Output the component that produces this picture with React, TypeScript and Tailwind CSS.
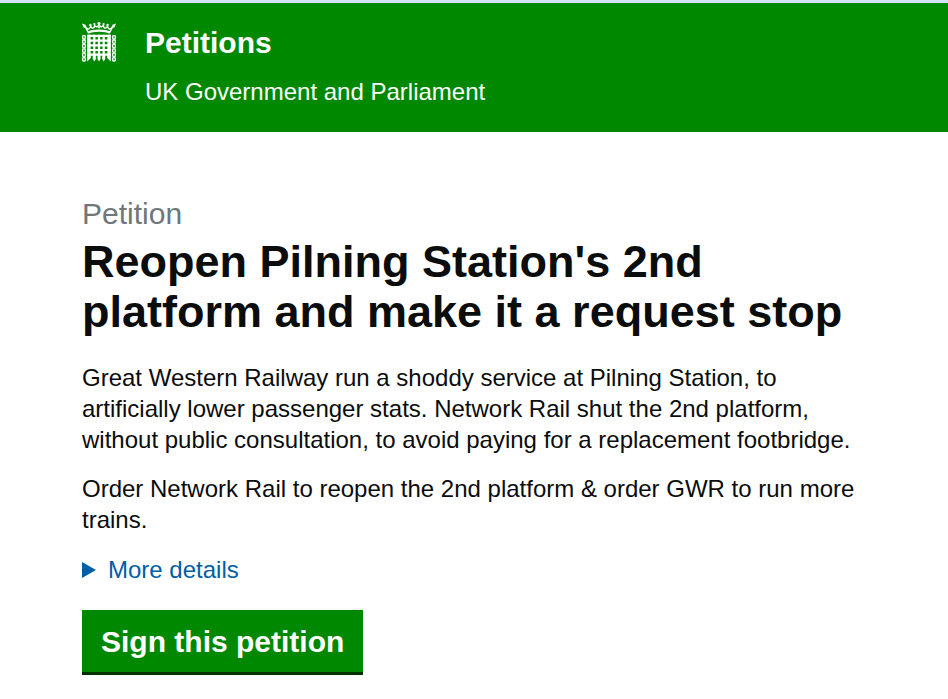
function Portcullis() {
  return (
    <svg
      viewBox="0 0 34 42"
      className="h-[42px] w-[34px] shrink-0"
      fill="none"
      stroke="#fff"
      aria-hidden="true"
    >
      {/* crown */}
      <path d="M6.6 11 L3 4 M27.4 11 L31 4" strokeWidth="1.6" />
      <path d="M6.2 10.6 C11 8 23 8 27.8 10.6" strokeWidth="2.4" />
      <path
        d="M4.5 6 C6 8 8 7.2 8.6 4.2 C10 7 12.4 6.6 12.6 3.4 C14 5.6 16 5.2 17 2.2 C18 5.2 20 5.6 21.4 3.4 C21.6 6.6 24 7 25.4 4.2 C26 7.2 28 8 29.5 6"
        strokeWidth="1.4"
      />
      <g fill="#fff" stroke="none">
        <path d="M0 1.4 L3.4 2.8 L4.8 6 L1.6 5.6 Z M34 1.4 L30.6 2.8 L29.2 6 L32.4 5.6 Z" />
        <circle cx="8.4" cy="3" r="1.2" />
        <circle cx="12.4" cy="2" r="1.1" />
        <circle cx="17" cy="1.3" r="1.5" />
        <circle cx="21.6" cy="2" r="1.1" />
        <circle cx="25.6" cy="3" r="1.2" />
        <circle cx="17" cy="5.6" r="1" />
      </g>
      {/* chains */}
      <g strokeWidth="1.3">
        {[13.6, 18, 22.4, 26.8, 31.2, 35.6].map((y) => (
          <g key={y}>
            <rect x="0.7" y={y} width="2.6" height="3.4" rx="0.8" />
            <rect x="30.7" y={y} width="2.6" height="3.4" rx="0.8" />
          </g>
        ))}
      </g>
      {/* grille */}
      <path d="M6.9 12.8v21 M27.1 12.8v21" strokeWidth="3.4" />
      <path d="M12.3 12.8v21 M17 12.8v21 M21.7 12.8v21" strokeWidth="2.2" />
      <path
        d="M5.2 13.9h23.6 M5.2 18.6h23.6 M5.2 23.3h23.6 M5.2 28h23.6 M5.2 32.7h23.6"
        strokeWidth="2.2"
      />
      <path
        d="M5.2 33h3.6v3l-3.6 3.4z M10.8 33h3v4l-1.5 2.4-1.5-2.4z M15.5 33h3v4l-1.5 2.4-1.5-2.4z M20.2 33h3v4l-1.5 2.4-1.5-2.4z M25.2 33h3.6v6.4l-3.6-3.4z"
        fill="#fff"
        stroke="none"
      />
    </svg>
  );
}

export default function App() {
  return (
    <div className="min-h-screen bg-white font-['Liberation_Sans',Arial,sans-serif] text-[#0b0c0c]">
      <header className="border-t-[3px] border-[#d3e3f3] bg-[#008800] text-white">
        <div className="flex gap-[29px] px-[82px] pt-[19px] pb-6">
          <Portcullis />
          <div>
            <a href="#" className="block text-[30px] leading-[42px] font-bold">
              Petitions
            </a>
            <p className="pt-3 text-2xl leading-8">
              UK Government and Parliament
            </p>
          </div>
        </div>
      </header>

      <main className="px-[82px] pt-[62px] pb-6">
        <h1 className="text-[45px] leading-[50px] font-bold">
          <span className="mb-[3px] block text-[30px] leading-10 font-normal text-[#6f777b]">
            Petition
          </span>
          Reopen Pilning Station's 2nd platform and make it a request stop
        </h1>
        <p className="mt-[25px] text-2xl leading-[31px]">
          Great Western Railway run a shoddy service at Pilning Station, to
          artificially lower passenger stats. Network Rail shut the 2nd
          platform, without public consultation, to avoid paying for a
          replacement footbridge.
        </p>
        <p className="mt-[18px] text-2xl leading-[31px]">
          Order Network Rail to reopen the 2nd platform &amp; order GWR to run
          more trains.
        </p>
        <details className="mt-[19px]">
          <summary className="flex cursor-pointer list-none items-center gap-3 text-2xl leading-8 text-[#005ea5]">
            <svg
              viewBox="0 0 14 16"
              className="h-4 w-3.5"
              fill="currentColor"
              aria-hidden="true"
            >
              <path d="M0 0 L14 8 L0 16 Z" />
            </svg>
            More details
          </summary>
        </details>
        <button
          type="button"
          className="mt-6 cursor-pointer border-b-[3px] border-[#003300] bg-[#008800] px-[19px] pt-3 pb-[10px] text-[30px] leading-10 font-bold text-white"
        >
          Sign this petition
        </button>
      </main>
    </div>
  );
}
